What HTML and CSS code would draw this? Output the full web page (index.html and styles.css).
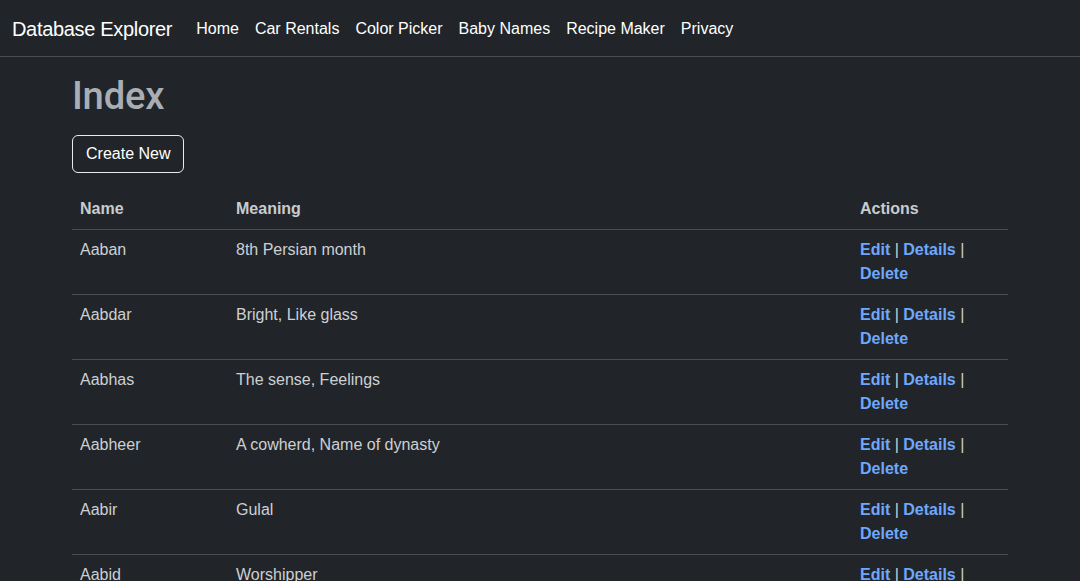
FILE: index.html
```html
<!DOCTYPE html>
<html lang="en">
<head>
<meta charset="utf-8">
<title>Index - Database Explorer</title>
<link rel="stylesheet" href="styles.css">
</head>
<body>
<header class="navbar">
  <a class="brand" href="#">Database Explorer</a>
  <nav class="nav">
    <a class="nav-link" href="#">Home</a>
    <a class="nav-link" href="#">Car Rentals</a>
    <a class="nav-link" href="#">Color Picker</a>
    <a class="nav-link" href="#">Baby Names</a>
    <a class="nav-link" href="#">Recipe Maker</a>
    <a class="nav-link" href="#">Privacy</a>
  </nav>
</header>
<main class="container">
  <h1 class="title">Index</h1>
  <div class="actions-bar"><a class="btn" href="#">Create New</a></div>
  <table class="table">
    <thead>
      <tr><th class="col-name">Name</th><th>Meaning</th><th class="col-actions">Actions</th></tr>
    </thead>
    <tbody>
      <tr><td>Aaban</td><td>8th Persian month</td><td><a href="#">Edit</a> | <a href="#">Details</a> | <a href="#">Delete</a></td></tr>
      <tr><td>Aabdar</td><td>Bright, Like glass</td><td><a href="#">Edit</a> | <a href="#">Details</a> | <a href="#">Delete</a></td></tr>
      <tr><td>Aabhas</td><td>The sense, Feelings</td><td><a href="#">Edit</a> | <a href="#">Details</a> | <a href="#">Delete</a></td></tr>
      <tr><td>Aabheer</td><td>A cowherd, Name of dynasty</td><td><a href="#">Edit</a> | <a href="#">Details</a> | <a href="#">Delete</a></td></tr>
      <tr><td>Aabir</td><td>Gulal</td><td><a href="#">Edit</a> | <a href="#">Details</a> | <a href="#">Delete</a></td></tr>
      <tr><td>Aabid</td><td>Worshipper</td><td><a href="#">Edit</a> | <a href="#">Details</a> | <a href="#">Delete</a></td></tr>
    </tbody>
  </table>
</main>
</body>
</html>
```

FILE: styles.css
```css
* { box-sizing: border-box; }
html, body { margin: 0; padding: 0; }
body {
  background: #212529;
  color: #d6d9dc;
  font-family: "Liberation Sans", Arial, sans-serif;
  font-size: 16px;
  line-height: 24px;
}
a { text-decoration: none; }

.navbar {
  display: flex;
  align-items: center;
  height: 57px;
  padding: 9px 12px 8px;
  border-bottom: 1px solid #4a4e53;
}
.brand {
  color: #ffffff;
  font-size: 20px;
  line-height: 30px;
  letter-spacing: -0.32px;
  margin-right: 16px;
  padding: 5px 0;
}
.nav { display: flex; }
.nav-link {
  color: #ffffff;
  padding: 8px;
  line-height: 24px;
}

.container {
  width: 960px;
  margin: 0 auto;
  padding: 0 12px;
}
.title {
  margin: 17px 0 8px;
  font-family: Roboto, "Liberation Sans", sans-serif;
  font-size: 38.2px;
  line-height: 1.2;
  font-weight: 500;
  color: #a9aeb4;
  letter-spacing: -0.2px;
}
.actions-bar {
  margin: 15px 0 16px;
  height: 38px;
}
.btn {
  display: inline-block;
  color: #ffffff;
  border: 1px solid #e9ecef;
  border-radius: 6px;
  padding: 6px 13px;
  line-height: 24px;
}

.table {
  width: 100%;
  border-collapse: collapse;
}
.table th, .table td {
  padding: 8px;
  text-align: left;
  vertical-align: top;
  border-bottom: 1px solid #4a4e53;
}
.table th {
  font-weight: bold;
  color: #c9cccf;
}
.table td { color: #cdd0d3; }
.col-name { width: 156px; }
.col-actions { width: 156px; }
.table td a {
  color: #6ea8fe;
  font-weight: bold;
}
```
